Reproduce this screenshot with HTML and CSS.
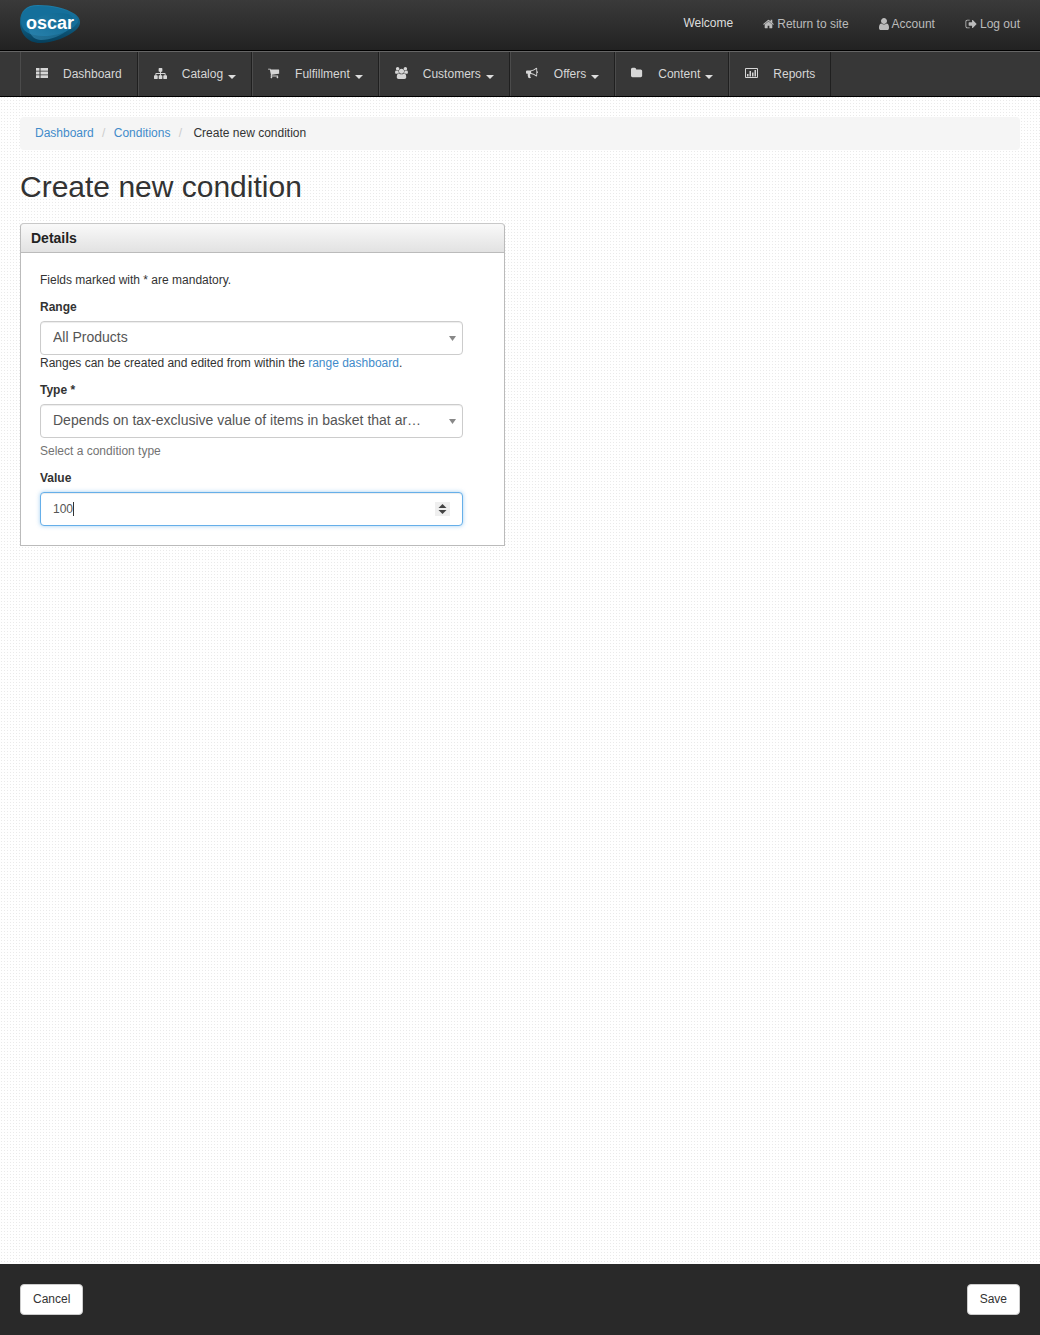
FILE: index.html
```html
<!DOCTYPE html>
<html lang="en">
<head>
<meta charset="utf-8">
<meta name="viewport" content="width=device-width, initial-scale=1">
<title>Create new condition</title>
<link rel="stylesheet" href="styles.css">
</head>
<body>
<header class="topbar">
  <a class="brand" href="#" aria-label="Oscar">
    <svg width="60" height="38" viewBox="0 0 60 38">
      <defs>
        <linearGradient id="logo-base" x1="0" y1="0" x2="0" y2="1">
          <stop offset="0" stop-color="#1d7fab"/>
          <stop offset="1" stop-color="#053f5c"/>
        </linearGradient>
        <linearGradient id="logo-shine" x1="1" y1="0" x2="0" y2="1">
          <stop offset="0" stop-color="#086088"/>
          <stop offset="1" stop-color="#3a91bb"/>
        </linearGradient>
      </defs>
      <path fill="url(#logo-base)" d="M0 17C0 6 6 0 18 0C32 0 46 3 55 9C61 13 62 20 56 25C48 32 32 38 20 38C8 38 0 29 0 17Z"/>
      <path fill="#146f9b" d="M1 16C1 7 7 1 18 1C32 1 46 4 54 10C57 12 58 15 58 17C54 24 40 31 24 31C9 31 1 26 1 16Z"/>
      <path fill="url(#logo-shine)" opacity=".6" d="M9 26C10 12 30 5 48 9C54 11 56 17 50 23C42 31 30 35 21 35C15 35 11 31 9 26Z"/>
      <text class="brand-text" x="6" y="24">oscar</text>
    </svg>
  </a>
  <ul class="account">
    <li class="welcome">Welcome</li>
    <li><a href="#"><svg width="11" height="12" viewBox="64 0 1664 1792"><path d="M1472 992v480q0 26-19 45t-45 19h-384v-384h-256v384h-384q-26 0-45-19t-19-45v-480q0-1 .5-3t.5-3l575-474 575 474q1 2 1 6zm223-69l-62 74q-8 9-21 11h-3q-13 0-21-7l-692-577-692 577q-12 8-24 7-13-2-21-11l-62-74q-8-10-7-23.5t11-21.5l719-599q32-26 76-26t76 26l244 204v-195q0-14 9-23t23-9h192q14 0 23 9t9 23v408l219 182q10 8 11 21.5t-7 23.5z"/></svg>Return to site</a></li>
    <li><a href="#"><svg width="10" height="12" viewBox="256 128 1280 1536"><path d="M1536 1399q0 109-62.5 187t-150.5 78h-854q-88 0-150.5-78t-62.5-187q0-85 8.5-160.5t31.5-152 58.5-131 94-89 134.5-34.5q131 128 313 128t313-128q76 0 134.5 34.5t94 89 58.5 131 31.5 152 8.5 160.5zm-256-887q0 159-112.5 271.5t-271.5 112.5-271.5-112.5-112.5-271.5 112.5-271.5 271.5-112.5 271.5 112.5 112.5 271.5z"/></svg>Account</a></li>
    <li><a href="#"><svg width="12" height="12" viewBox="0 0 1792 1792"><path d="M704 1440q0 4 1 20t.5 26.5-3 23.5-10 19.5-20.5 6.5h-320q-119 0-203.5-84.5t-84.5-203.5v-704q0-119 84.5-203.5t203.5-84.5h320q13 0 22.5 9.5t9.5 22.5q0 4 1 20t.5 26.5-3 23.5-10 19.5-20.5 6.5h-320q-66 0-113 47t-47 113v704q0 66 47 113t113 47h312l11.5 1 11.5 3 8 5.5 7 9 2 13.5zm1024-544q0 26-19 45l-544 544q-19 19-45 19t-45-19-19-45v-288h-448q-26 0-45-19t-19-45v-384q0-26 19-45t45-19h448v-288q0-26 19-45t45-19 45 19l544 544q19 19 19 45z"/></svg>Log out</a></li>
  </ul>
</header>
<nav class="mainnav">
  <ul>
    <li><a href="#"><svg width="12" height="12" viewBox="0 0 12 12"><path d="M0 1h3.500v2.800H0zM4.500 1H12v2.800H4.500zM0 4.600h3.500v2.800H0zM4.500 4.600H12v2.800H4.500zM0 8.200h3.500V11H0zM4.500 8.200H12V11H4.500z"/></svg>Dashboard</a></li>
    <li><a href="#"><svg width="13" height="13" viewBox="0 0 1792 1792"><path d="M1792 1248v320q0 40-28 68t-68 28h-320q-40 0-68-28t-28-68v-320q0-40 28-68t68-28h96v-192h-512v192h96q40 0 68 28t28 68v320q0 40-28 68t-68 28h-320q-40 0-68-28t-28-68v-320q0-40 28-68t68-28h96v-192h-512v192h96q40 0 68 28t28 68v320q0 40-28 68t-68 28h-320q-40 0-68-28t-28-68v-320q0-40 28-68t68-28h96v-192q0-52 38-90t90-38h512v-192h-96q-40 0-68-28t-28-68v-320q0-40 28-68t68-28h320q40 0 68 28t28 68v320q0 40-28 68t-68 28h-96v192h512q52 0 90 38t38 90v192h96q40 0 68 28t28 68z"/></svg>Catalog<span class="caret"></span></a></li>
    <li><a href="#"><svg width="12" height="12" viewBox="64 0 1792 1792"><path d="M704 1536q0 52-38 90t-90 38-90-38-38-90 38-90 90-38 90 38 38 90zm896 0q0 52-38 90t-90 38-90-38-38-90 38-90 90-38 90 38 38 90zm128-1088v512q0 24-16.500 42.500t-40.500 21.500l-1044 122q13 60 13 70 0 16-24 64h920q26 0 45 19t19 45-19 45-45 19h-1024q-26 0-45-19t-19-45q0-11 8-31.500t16-36 21.500-40 15.500-29.500l-177-823h-204q-26 0-45-19t-19-45 19-45 45-19h256q16 0 28.500 6.500t19.500 15.500 13 24.500 8 26 5.500 29.500 4.500 26h1201q26 0 45 19t19 45z"/></svg>Fulfillment<span class="caret"></span></a></li>
    <li><a href="#"><svg width="13" height="12" viewBox="64 0 1920 1792"><path d="M657 896q-162 5-265 128h-134q-82 0-138-40.500t-56-118.500q0-353 124-353 6 0 43.500 21t97.500 42.500 119 21.500q67 0 133-23-5 37-5 66 0 139 81 256zm1071 637q0 120-73 189.500t-194 69.500h-874q-121 0-194-69.500t-73-189.500q0-53 3.500-103.500t14-109 26.500-108.500 43-97.500 62-81 85.500-53.500 111.500-20q10 0 43 21.500t73 48 107 48 135 21.500 135-21.500 107-48 73-48 43-21.500q61 0 111.500 20t85.500 53.500 62 81 43 97.500 26.500 108.500 14 109 3.500 103.500zm-1024-1277q0 106-75 181t-181 75-181-75-75-181 75-181 181-75 181 75 75 181zm704 384q0 159-112.500 271.500t-271.500 112.500-271.500-112.500-112.500-271.500 112.500-271.500 271.500-112.500 271.500 112.500 112.500 271.500zm576 225q0 78-56 118.500t-138 40.500h-134q-103-123-265-128 81-117 81-256 0-29-5-66 66 23 133 23 59 0 119-21.500t97.500-42.500 43.500-21q124 0 124 353zm-128-609q0 106-75 181t-181 75-181-75-75-181 75-181 181-75 181 75 75 181z"/></svg>Customers<span class="caret"></span></a></li>
    <li><a href="#"><svg width="13" height="12" viewBox="0 0 1941 1792"><path d="M1664 640q53 0 90.500 37.500t37.500 90.500-37.500 90.500-90.500 37.500v384q0 52-38 90t-90 38q-417-347-812-380-58 19-91 66t-31 100.500 40 92.500q-20 33-23 65.500t6 58 33.500 55 48 50 61.500 50.500q-29 58-111.500 83t-168.500 11.500-132-55.500q-7-23-29.500-87.500t-32-94.500-23-89-15-101 3.500-98.500 22-110.500h-122q-66 0-113-47t-47-113v-192q0-66 47-113t113-47h480q435 0 896-384 52 0 90 38t38 90v384zm-128 604v-954q-394 302-768 343v270q377 42 768 341z"/></svg>Offers<span class="caret"></span></a></li>
    <li><a href="#"><svg width="12" height="12" viewBox="64 0 1792 1792"><path d="M1728 608v704q0 92-66 158t-158 66h-1216q-92 0-158-66t-66-158v-960q0-92 66-158t158-66h320q92 0 158 66t66 158v32h672q92 0 158 66t66 158z"/></svg>Content<span class="caret"></span></a></li>
    <li><a href="#"><svg width="13" height="12" viewBox="0 0 13 12"><path fill-rule="evenodd" d="M1 1h11q1 0 1 1v8q0 1-1 1H1q-1 0-1-1V2q0-1 1-1zm0 1v8h11V2zM2 7h1.500v2.500H2zM4.500 4H6v5.500H4.500zM7 5.500h1.500v4H7zM9.500 3H11v6.500H9.500z"/></svg>Reports</a></li>
  </ul>
</nav>
<main class="page">
  <ol class="breadcrumb">
    <li><a href="#">Dashboard</a></li>
    <li><a href="#">Conditions</a></li>
    <li class="current">Create new condition</li>
  </ol>
  <h1>Create new condition</h1>
  <form id="condition" class="columns">
    <section class="panel">
      <h2>Details</h2>
      <div class="panel-body">
        <p class="note">Fields marked with * are mandatory.</p>
        <div class="field">
          <label for="range">Range</label>
          <select id="range" class="control"><option>All Products</option></select>
          <p>Ranges can be created and edited from within the <a href="#">range dashboard</a>.</p>
        </div>
        <div class="field">
          <label for="type">Type *</label>
          <select id="type" class="control"><option>Depends on tax-exclusive value of items in basket that are in the condition range</option></select>
          <p class="hint">Select a condition type</p>
        </div>
        <div class="field">
          <label for="value">Value</label>
          <input id="value" class="control untouched" type="number" value="100">
        </div>
      </div>
    </section>
  </form>
</main>
<footer class="actions">
  <a class="button" href="#">Cancel</a>
  <button class="button" type="submit" form="condition">Save</button>
</footer>
<script src="main.js"></script>
</body>
</html>
```
FILE: main.js
```js
// Start with the cursor after the existing value.
const field = document.getElementById('value');
field.focus({ preventScroll: true });
const current = field.value;
field.value = '';
field.value = current;

// The resting cursor gives way to the browser's own one at the first edit.
for (const type of ['keydown', 'pointerdown', 'input', 'blur']) {
  field.addEventListener(type, () => field.classList.remove('untouched'));
}
```
FILE: styles.css
```css
* {
  box-sizing: border-box;
}

body {
  display: flex;
  flex-direction: column;
  min-height: 100vh;
  margin: 0;
  color: #333;
  background: #fff url("data:image/svg+xml,%3Csvg xmlns='http://www.w3.org/2000/svg' width='3' height='3'%3E%3Crect x='1' y='1' width='1' height='1' fill='%23eaeaea'/%3E%3C/svg%3E");
  font: 12px/17px "Liberation Sans", Arial, sans-serif;
}

a {
  color: #428bca;
  text-decoration: none;
}

ul,
ol {
  margin: 0;
  padding: 0;
  list-style: none;
}

p {
  margin: 0;
}

svg {
  display: block;
  flex: none;
  fill: currentColor;
}

.topbar {
  display: flex;
  justify-content: space-between;
  align-items: flex-start;
  height: 51px;
  padding: 5px 20px 0;
  border-bottom: 1px solid #000;
  background: linear-gradient(#3a3a3a, #222);
}

.brand-text {
  fill: #fff;
  font: bold 18px "Liberation Sans", Arial, sans-serif;
}

.account {
  display: flex;
  gap: 30px;
  padding-top: 10px;
  color: #ddd;
}

.account a {
  display: flex;
  gap: 3px;
  align-items: center;
  padding-top: 1px;
  color: #bbb;
}

.account svg {
  margin-bottom: 2px;
}

.mainnav {
  height: 46px;
  padding: 0 20px;
  border-top: 1px solid #666;
  border-bottom: 1px solid #000;
  background: #373737;
}

.mainnav ul {
  display: flex;
}

.mainnav li {
  border-left: 1px solid #4b4b4b;
  border-right: 1px solid #1f1f1f;
}

.mainnav a {
  display: flex;
  align-items: center;
  height: 44px;
  padding: 0 15px;
  color: #d6d6d6;
}

.mainnav svg {
  margin: 0 15px 2px 0;
}

.caret {
  margin: 6px 0 0 5px;
  border: 4px solid transparent;
  border-top-color: #ddd;
  border-bottom: 0;
}

.page {
  flex: 1;
  padding: 20px;
}

.breadcrumb {
  margin-bottom: 20px;
  padding: 8px 15px;
  border-radius: 4px;
  background: #f5f5f5;
}

.breadcrumb li {
  display: inline-block;
}

.breadcrumb li + li::before {
  padding: 0 5px;
  color: #ccc;
  content: "/\00a0";
}

.breadcrumb .current::before {
  padding-right: 8px;
}

h1 {
  margin: 0 0 20px;
  font-size: 30px;
  font-weight: 400;
  line-height: 33px;
}

.columns {
  display: grid;
  grid-template-columns: 1fr 1fr;
  gap: 30px;
}

.panel h2 {
  margin: 0;
  padding: 5px 10px;
  border: 1px solid #bbb;
  border-top-color: #c8c8c8;
  border-radius: 4px 4px 0 0;
  color: #222;
  background: linear-gradient(#f9f9f9, #e2e2e2);
  font-size: 14px;
  line-height: 18px;
}

.panel-body {
  display: grid;
  gap: 10px;
  padding: 19px;
  border: 1px solid #bbb;
  border-top: 0;
  background: #fff;
}

label {
  display: block;
  margin-bottom: 5px;
  font-weight: 700;
}

.control {
  display: block;
  width: 95%;
  height: 34px;
  padding: 6px 12px;
  border: 1px solid #ccc;
  border-radius: 4px;
  color: #555;
  background-color: #fff;
  box-shadow: inset 0 1px 1px rgba(0, 0, 0, .075);
  font: 12px/17px "Liberation Sans", Arial, sans-serif;
}

select.control {
  padding: 0 36px 2px 12px;
  appearance: none;
  background-image: url("data:image/svg+xml,%3Csvg xmlns='http://www.w3.org/2000/svg' width='7' height='5'%3E%3Cpath d='M0 0h7L3.5 5z' fill='%23888'/%3E%3C/svg%3E");
  background-repeat: no-repeat;
  background-position: right 6px center;
  font-size: 14px;
  text-overflow: ellipsis;
}

input.control:focus {
  border-color: #66afe9;
  outline: 0;
  box-shadow: inset 0 1px 1px rgba(0, 0, 0, .075), 0 0 4px rgba(102, 175, 233, .6);
}

input.untouched {
  background: linear-gradient(#333, #333) 32px 9px / 1px 14px no-repeat #fff;
  caret-color: transparent;
}

input.control::-webkit-inner-spin-button {
  width: 15px;
  height: 14px;
  appearance: none;
  background: #efefef url("data:image/svg+xml,%3Csvg xmlns='http://www.w3.org/2000/svg' width='15' height='14'%3E%3Cpath d='M3.500 6h8L7.500 2zM3.500 8h8L7.500 12z' fill='%23444'/%3E%3C/svg%3E");
  opacity: 1;
}

.hint {
  margin-top: 5px;
  color: #737373;
}

.actions {
  display: flex;
  justify-content: space-between;
  padding: 20px;
  background: #292929;
}

.button {
  padding: 6px 12px;
  border: 1px solid #ccc;
  border-radius: 4px;
  color: #333;
  background: #fff;
  font: 12px/17px "Liberation Sans", Arial, sans-serif;
}
```
